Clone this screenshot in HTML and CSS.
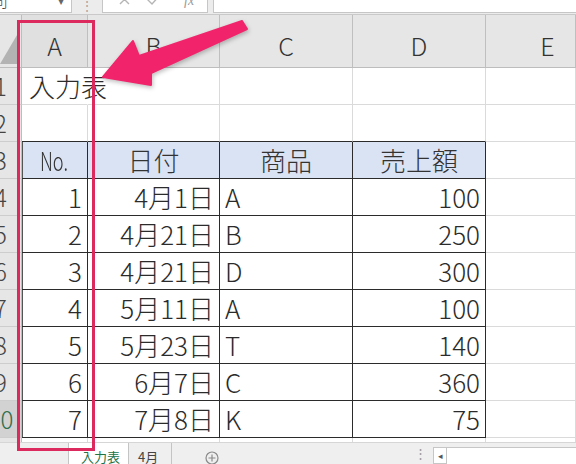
FILE: index.html
```html
<!DOCTYPE html>
<html lang="ja">
<head>
<meta charset="utf-8">
<title>入力表</title>
<link rel="stylesheet" href="styles.css">
</head>
<body>
<div class="screen">
  <div class="fbar">
    <div class="namebox"><span class="nb-text">司</span><span class="nb-caret">▾</span></div>
    <div class="fdots">⋮</div>
    <div class="fbtns">
      <svg class="ficons" width="106" height="14" viewBox="0 0 106 14">
        <path d="M17 -5 L26 4 M26 -5 L17 4" stroke="#b5b5b5" stroke-width="1.4" fill="none"/>
        <path d="M44 -1 L49 4 L58 -6" stroke="#b5b5b5" stroke-width="1.4" fill="none"/>
        <text x="81" y="5" class="fx">fx</text>
      </svg>
    </div>
    <div class="finput"></div>
  </div>

  <div class="sheet">
    <div class="grid">
      <div class="corner"><svg width="22" height="53" viewBox="0 0 22 53"><polygon points="0,49 17,20 17,49" fill="#b3b3b3"/></svg></div>
      <div class="ch sel">A</div>
      <div class="ch">B</div>
      <div class="ch">C</div>
      <div class="ch">D</div>
      <div class="ch last">E</div>

      <div class="rh"><span>1</span></div>
      <div class="c over">入力表</div>
      <div class="c"></div>
      <div class="c"></div>
      <div class="c"></div>
      <div class="c"></div>

      <div class="rh"><span>2</span></div>
      <div class="c tt"></div>
      <div class="c tt"></div>
      <div class="c tt"></div>
      <div class="c tt"></div>
      <div class="c"></div>

      <div class="rh"><span>3</span></div>
      <div class="c t a hd m"><span class="narrow">No.</span></div>
      <div class="c t hd m">日付</div>
      <div class="c t hd m">商品</div>
      <div class="c t hd m">売上額</div>
      <div class="c"></div>

      <div class="rh"><span>4</span></div>
      <div class="c t a r">1</div>
      <div class="c t r">4月1日</div>
      <div class="c t">A</div>
      <div class="c t r">100</div>
      <div class="c"></div>

      <div class="rh"><span>5</span></div>
      <div class="c t a r">2</div>
      <div class="c t r">4月21日</div>
      <div class="c t">B</div>
      <div class="c t r">250</div>
      <div class="c"></div>

      <div class="rh"><span>6</span></div>
      <div class="c t a r">3</div>
      <div class="c t r">4月21日</div>
      <div class="c t">D</div>
      <div class="c t r">300</div>
      <div class="c"></div>

      <div class="rh"><span>7</span></div>
      <div class="c t a r">4</div>
      <div class="c t r">5月11日</div>
      <div class="c t">A</div>
      <div class="c t r">100</div>
      <div class="c"></div>

      <div class="rh"><span>8</span></div>
      <div class="c t a r">5</div>
      <div class="c t r">5月23日</div>
      <div class="c t">T</div>
      <div class="c t r">140</div>
      <div class="c"></div>

      <div class="rh"><span>9</span></div>
      <div class="c t a r">6</div>
      <div class="c t r">6月7日</div>
      <div class="c t">C</div>
      <div class="c t r">360</div>
      <div class="c"></div>

      <div class="rh rsel"><span>10</span></div>
      <div class="c t a r">7</div>
      <div class="c t r">7月8日</div>
      <div class="c t">K</div>
      <div class="c t r">75</div>
      <div class="c"></div>

      <div class="rh"><span>11</span></div>
      <div class="c"></div>
      <div class="c"></div>
      <div class="c"></div>
      <div class="c"></div>
      <div class="c"></div>
    </div>
  </div>

  <div class="tabbar">
    <div class="tab-lead"></div>
    <div class="tab active">入力表</div>
    <div class="tab">4月</div>
    <div class="addtab"><svg width="14" height="14" viewBox="0 0 14 14"><circle cx="7" cy="7" r="6" fill="none" stroke="#8a8a8a" stroke-width="1.2"/><path d="M7 3.5 V10.5 M3.5 7 H10.5" stroke="#8a8a8a" stroke-width="1.2"/></svg></div>
    <div class="tab-fill"></div>
    <div class="tdots">⋮</div>
    <div class="sbtn">◂</div>
    <div class="scroll"></div>
  </div>

  <div class="redbox"></div>
  <svg class="arrow" width="576" height="464" viewBox="0 0 576 464">
    <polygon points="103,77 133,41 139,56 242,21 247,29 151,73 151,85" fill="#f1246b" stroke="#f1246b" stroke-width="2" stroke-linejoin="round"/>
  </svg>
</div>
</body>
</html>
```

FILE: styles.css
```css
html, body {
  margin: 0;
  padding: 0;
}
body {
  width: 576px;
  height: 464px;
  overflow: hidden;
  background: #ffffff;
  font-family: "Noto Sans CJK JP", "Noto Sans", sans-serif;
  font-weight: 300;
  color: #2b2b2b;
}
.screen {
  position: relative;
  width: 576px;
  height: 464px;
  overflow: hidden;
}

/* formula bar strip */
.fbar {
  height: 15px;
  display: flex;
  background: #ececec;
  border-bottom: 1px solid #c9c9c9;
  box-sizing: border-box;
}
.namebox {
  width: 72px;
  height: 13px;
  background: #fff;
  border-right: 1px solid #c6c6c6;
  border-bottom: 1px solid #c6c6c6;
  box-sizing: border-box;
  position: relative;
  overflow: hidden;
}
.nb-text {
  position: absolute;
  left: -8px;
  top: -12px;
  font-size: 16px;
  color: #444;
}
.nb-caret {
  position: absolute;
  left: 58px;
  top: -9px;
  font-size: 12px;
  color: #666;
}
.fdots {
  width: 30px;
  text-align: center;
  font-size: 12px;
  line-height: 10px;
  color: #a0a0a0;
  overflow: hidden;
  height: 14px;
}
.fbtns {
  width: 106px;
  height: 13px;
  background: #fff;
  border-left: 1px solid #c6c6c6;
  border-right: 1px solid #c6c6c6;
  border-bottom: 1px solid #c6c6c6;
  box-sizing: border-box;
  overflow: hidden;
}
.ficons {
  display: block;
}
.fx {
  font-family: "Liberation Serif", serif;
  font-style: italic;
  font-size: 14px;
  fill: #9a9a9a;
}
.finput {
  flex: 1;
  margin-left: 5px;
  height: 13px;
  background: #fff;
  border-left: 1px solid #c6c6c6;
  border-bottom: 1px solid #c6c6c6;
  box-sizing: border-box;
}

/* sheet grid */
.sheet {
  height: 427px;
  overflow: hidden;
}
.grid {
  display: grid;
  grid-template-columns: 22px 66px 132px 133px 133px 90px;
  grid-template-rows: 53px;
  grid-auto-rows: 37px;
}
.corner {
  background: #e6e6e6;
  border-right: 1px solid #bdbdbd;
  border-bottom: 1px solid #bdbdbd;
  box-sizing: border-box;
  overflow: hidden;
}
.corner svg {
  display: block;
}
.ch {
  background: #e6e6e6;
  border-right: 1px solid #bfbfbf;
  border-bottom: 1px solid #bdbdbd;
  box-sizing: border-box;
  padding-top: 8px;
  line-height: 44px;
  text-align: center;
  font-size: 25px;
  color: #333;
}
.ch.sel {
  background: #e0e0e0;
}
.ch.last {
  padding-left: 34px;
}
.rh {
  background: #e6e6e6;
  border-right: 1px solid #bdbdbd;
  border-bottom: 1px solid #cdcdcd;
  box-sizing: border-box;
  display: flex;
  justify-content: center;
  overflow: hidden;
  font-size: 24px;
  line-height: 36px;
  color: #444;
}
.rh span {
  margin-left: -20px;
  white-space: nowrap;
}
.rh.rsel {
  background: #d2d2d2;
  color: #2f6f4c;
}
.c {
  border-right: 1px solid #dadada;
  border-bottom: 1px solid #dadada;
  box-sizing: border-box;
  padding: 0 5px;
  font-size: 26px;
  line-height: 36px;
  white-space: nowrap;
  overflow: hidden;
}
.c.over {
  overflow: visible;
  border-right-color: transparent;
  padding-left: 7px;
  position: relative;
  z-index: 1;
}
.c.tt {
  border-bottom-color: #2b2b2b;
}
.c.t {
  border-right-color: #2b2b2b;
  border-bottom-color: #2b2b2b;
}
.c.a {
  box-shadow: inset 1px 0 0 #555;
}
.c.hd {
  background: #dae3f3;
  color: #333;
}
.c.r {
  text-align: right;
}
.c.m {
  text-align: center;
}
.narrow {
  display: inline-block;
  transform: scaleX(0.7);
}

/* sheet tabs */
.tabbar {
  height: 22px;
  display: flex;
  background: #efefef;
  border-top: 1px solid #d6d6d6;
  box-sizing: border-box;
}
.tab-lead {
  width: 68px;
}
.tab {
  width: 44px;
  border-left: 1px solid #c4c4c4;
  border-right: 1px solid #c4c4c4;
  box-sizing: border-box;
  font-size: 13px;
  font-weight: 400;
  line-height: 14px;
  padding-top: 7px;
  padding-left: 9px;
  color: #444;
  overflow: hidden;
}
.tab.active {
  width: 60px;
  border-right: none;
  background: #ffffff;
  color: #217346;
  padding-left: 12px;
}
.addtab {
  margin-left: 33px;
  padding-top: 8px;
}
.addtab svg {
  display: block;
}
.tab-fill {
  flex: 1;
}
.tdots {
  width: 8px;
  margin-right: 11px;
  font-size: 13px;
  line-height: 20px;
  color: #9a9a9a;
  text-align: center;
}
.sbtn {
  width: 14px;
  margin-top: 4px;
  background: #fff;
  border: 1px solid #c6c6c6;
  box-sizing: border-box;
  font-size: 9px;
  line-height: 16px;
  text-align: center;
  color: #555;
}
.scroll {
  width: 129px;
  margin-top: 4px;
  background: #fff;
  border-top: 1px solid #c6c6c6;
  box-sizing: border-box;
}

/* annotations */
.redbox {
  position: absolute;
  left: 17px;
  top: 20px;
  width: 78px;
  height: 431px;
  border: 3px solid #dc2a5f;
  box-sizing: border-box;
  pointer-events: none;
  z-index: 5;
}
.arrow {
  position: absolute;
  left: 0;
  top: 0;
  pointer-events: none;
  z-index: 6;
  filter: drop-shadow(1px 2px 2px rgba(0, 0, 0, 0.25));
}
```
